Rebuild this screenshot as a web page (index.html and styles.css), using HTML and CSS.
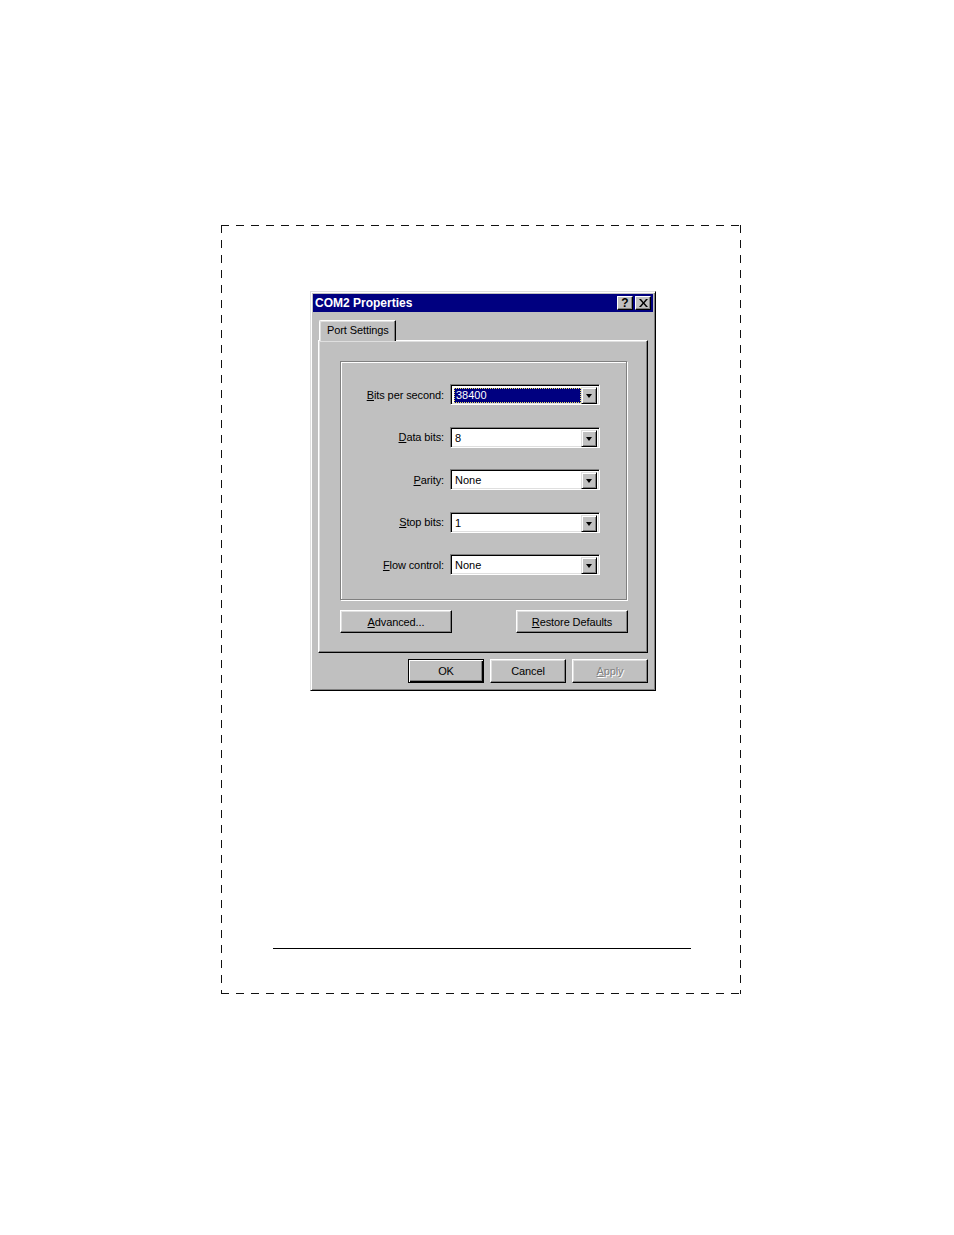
FILE: index.html
```html
<!DOCTYPE html>
<html>
<head>
<meta charset="utf-8">
<link rel="stylesheet" href="styles.css">
</head>
<body>
<div class="page">
  <div class="frame">
    <div class="dialog">
      <div class="titlebar">
        <span class="title">COM2 Properties</span>
        <div class="tbtns">
          <span class="tbtn help">?</span>
          <span class="tbtn close"><svg width="9" height="8" viewBox="0 0 9 8"><path d="M0 0h2l2.5 3 2.5-3h2L5.5 4 9 8H7L4.5 5 2 8H0l3.5-4z" fill="#000"/></svg></span>
        </div>
      </div>
      <div class="body">
        <div class="tabs"><div class="tab">Port Settings</div></div>
        <div class="panel">
          <div class="group">
            <label class="lbl"><u>B</u>its per second:</label>
            <div class="combo"><div class="ctext"><span class="sel">38400</span></div><div class="dd"><span class="tri"></span></div></div>
            <label class="lbl"><u>D</u>ata bits:</label>
            <div class="combo"><div class="ctext">8</div><div class="dd"><span class="tri"></span></div></div>
            <label class="lbl"><u>P</u>arity:</label>
            <div class="combo"><div class="ctext">None</div><div class="dd"><span class="tri"></span></div></div>
            <label class="lbl"><u>S</u>top bits:</label>
            <div class="combo"><div class="ctext">1</div><div class="dd"><span class="tri"></span></div></div>
            <label class="lbl"><u>F</u>low control:</label>
            <div class="combo"><div class="ctext">None</div><div class="dd"><span class="tri"></span></div></div>
          </div>
          <div class="brow">
            <div class="btn wide"><u>A</u>dvanced...</div>
            <div class="btn wide"><u>R</u>estore Defaults</div>
          </div>
        </div>
        <div class="actions">
          <div class="btn act def">OK</div>
          <div class="btn act">Cancel</div>
          <div class="btn act dis"><u>A</u>pply</div>
        </div>
      </div>
    </div>
    <div class="rule"></div>
  </div>
</div>
</body>
</html>
```
FILE: styles.css
```css
html, body { margin: 0; padding: 0; background: #fff; }
body { width: 954px; height: 1235px; overflow: hidden; font-family: "Liberation Sans", Arial, sans-serif; }
.page { padding: 225px 0 0 221px; }
.frame {
  width: 520px; height: 769px; box-sizing: border-box;
  display: flex; flex-direction: column; align-items: flex-start;
  background:
    repeating-linear-gradient(90deg, #111 0 8px, transparent 8px 15px) left top / 100% 1px no-repeat,
    repeating-linear-gradient(90deg, #111 0 8px, transparent 8px 15px) left bottom / 100% 1px no-repeat,
    repeating-linear-gradient(180deg, #111 0 8px, transparent 8px 15px) left top / 1px 100% no-repeat,
    repeating-linear-gradient(180deg, #111 0 8px, transparent 8px 15px) right top / 1px 100% no-repeat;
  padding-top: 66px;
}
.dialog {
  margin-left: 89px; width: 346px; height: 400px; box-sizing: border-box;
  background: #c0c0c0;
  border: 1px solid; border-color: #dfdfdf #000 #000 #dfdfdf;
  box-shadow: inset 1px 1px #fff, inset -1px -1px #808080;
  padding: 2px;
  display: flex; flex-direction: column;
}
.titlebar {
  height: 18px; background: #000080; display: flex; align-items: center;
  justify-content: space-between; padding: 0 2px;
}
.title { color: #fff; font-weight: bold; font-size: 12px; letter-spacing: 0; }
.tbtns { display: flex; gap: 2px; }
.tbtn {
  width: 16px; height: 14px; box-sizing: border-box; background: #c0c0c0;
  border: 1px solid; border-color: #fff #000 #000 #fff;
  box-shadow: inset -1px -1px #808080;
  display: flex; align-items: center; justify-content: center;
  font-size: 12px; font-weight: bold; color: #000; line-height: 1;
}
.body { flex: 1; padding: 8px 5px 0 5px; display: flex; flex-direction: column; }
.tabs { display: flex; padding-left: 1px; height: 20px; }
.tab {
  position: relative; z-index: 1;
  height: 21px; box-sizing: border-box; padding: 3px 0 0 7px; width: 77px;
  background: #c0c0c0; font-size: 11px; color: #000; white-space: nowrap; letter-spacing: -0.1px;
  border-top: 1px solid #fff; border-left: 1px solid #fff; border-right: 1px solid #000;
  border-top-left-radius: 2px; border-top-right-radius: 1px;
  box-shadow: inset -1px 0 #808080, inset 1px 1px #dfdfdf;
}
.panel {
  height: 313px; box-sizing: border-box;
  border: 1px solid; border-color: #fff #000 #000 #fff;
  box-shadow: inset -1px -1px #808080, inset 1px 1px #dfdfdf;
  padding: 20px 0 0 21px;
}
.group {
  width: 287px; height: 239px; box-sizing: border-box;
  border: 1px solid #808080;
  box-shadow: inset 1px 1px #fff, 1px 1px #fff;
  display: grid; grid-template-columns: 103px 150px; column-gap: 6px;
  grid-auto-rows: 21px; row-gap: 21.5px; align-content: start;
  padding-top: 22px;
}
.lbl { font-size: 11px; color: #000; text-align: right; align-self: center; white-space: nowrap; letter-spacing: -0.1px; }
.combo {
  box-sizing: border-box; height: 21px; background: #fff;
  border: 1px solid; border-color: #808080 #fff #fff #808080;
  box-shadow: inset 1px 1px #000, inset -1px -1px #dfdfdf;
  padding: 2px; display: flex;
}
.ctext { flex: 1; font-size: 11px; color: #000; padding: 1px 0 0 2px; display: flex; align-items: center; }
.ctext .sel {
  display: block; width: 127px; height: 15px; box-sizing: border-box; margin-left: -1px;
  background: #000080; color: #fff; outline: 1px dotted #e8e060; outline-offset: -1px;
  padding: 1px 2px; line-height: 13px;
}
.dd {
  width: 16px; height: 17px; box-sizing: border-box; background: #c0c0c0;
  border: 1px solid; border-color: #dfdfdf #000 #000 #dfdfdf;
  box-shadow: inset 1px 1px #fff, inset -1px -1px #808080;
  display: flex; align-items: center; justify-content: center;
}
.tri { width: 0; height: 0; border-left: 3.5px solid transparent; border-right: 3.5px solid transparent; border-top: 4px solid #000; margin-top: 1px; }
.brow { width: 288px; display: flex; justify-content: space-between; margin-top: 10px; }
.btn {
  box-sizing: border-box; height: 23px; background: #c0c0c0;
  border: 1px solid; border-color: #fff #000 #000 #fff;
  box-shadow: inset -1px -1px #808080, inset 1px 1px #dfdfdf;
  font-size: 11px; color: #000; display: flex; align-items: center; justify-content: center;
  letter-spacing: -0.1px;
}
.wide { width: 112px; }
.actions { display: flex; justify-content: flex-end; gap: 6px; margin-top: 6px; }
.act { width: 76px; height: 24px; }
.def { border-color: #000; box-shadow: inset 1px 1px #fff, inset -1px -1px #000, inset -2px -2px #808080; }
.dis { color: #808080; text-shadow: 1px 1px #fff; }
.rule { margin: 257px 0 0 52px; width: 418px; height: 1px; background: #000; }
```
